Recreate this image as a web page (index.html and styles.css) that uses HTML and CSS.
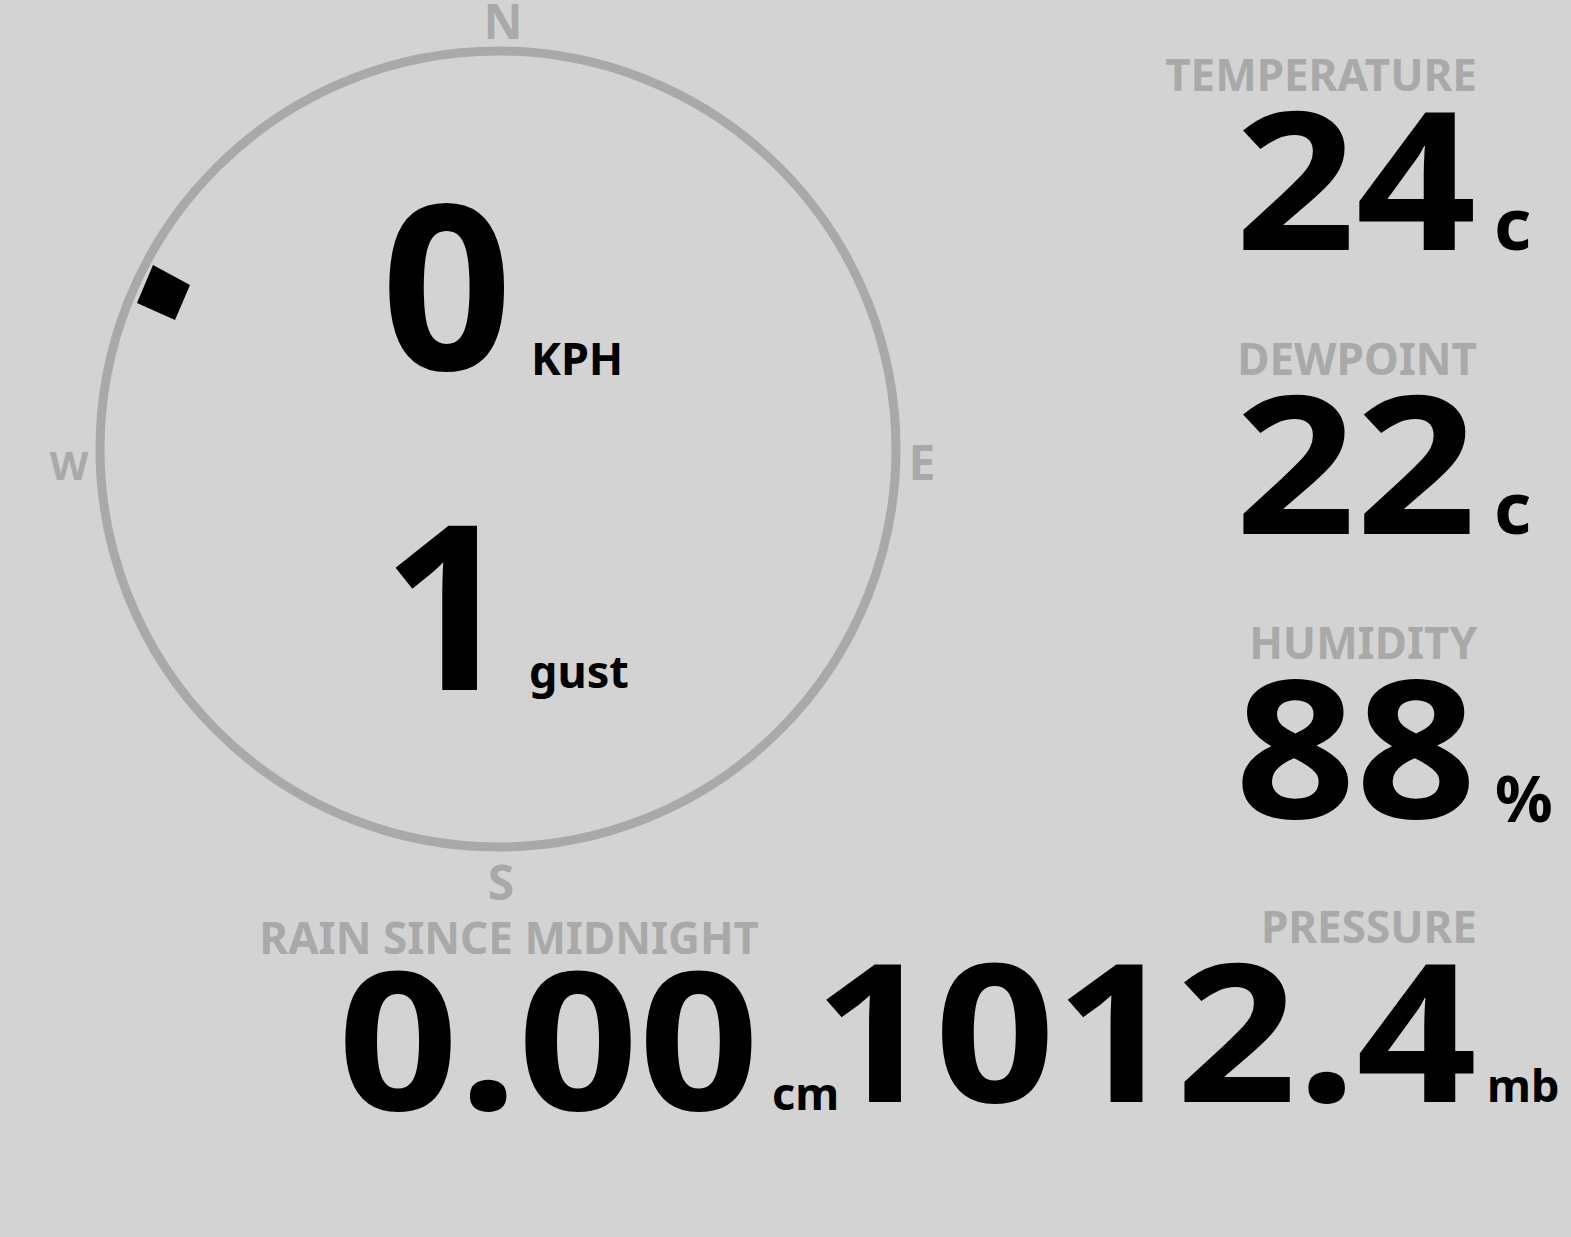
FILE: index.html
```html
<!DOCTYPE html>
<html lang="en">
<head>
<meta charset="utf-8">
<title>Weather</title>
<link rel="stylesheet" href="styles.css">
</head>
<body>
<div class="page">
  <div class="left">
    <svg class="compass" width="1000" height="910" viewBox="0 0 1000 910" xmlns="http://www.w3.org/2000/svg">
      <circle class="ring" cx="498" cy="449" r="398"/>
      <text class="cardinal" x="503" y="39" text-anchor="middle">N</text>
      <text class="cardinal" x="922" y="480" text-anchor="middle">E</text>
      <text class="cardinal" x="501" y="900" text-anchor="middle">S</text>
      <text class="cardinal w" x="69" y="480" text-anchor="middle">W</text>
      <polygon class="needle" points="153,265 190,285 175,320 137,303"/>
      <text class="speed" x="381" y="370">0</text>
      <text class="speed-unit" x="531" y="375">KPH</text>
      <text class="speed" x="382" y="690">1</text>
      <text class="speed-unit" x="529" y="688">gust</text>
    </svg>
    <div class="stat rain">
      <div class="label">RAIN SINCE MIDNIGHT</div>
      <div class="value"><span class="num">0.00</span><span class="unit u-cm">cm</span></div>
    </div>
  </div>
  <div class="right">
    <div class="stat">
      <div class="label">TEMPERATURE</div>
      <div class="value"><span class="num">24</span><span class="unit u-big">c</span></div>
    </div>
    <div class="stat">
      <div class="label">DEWPOINT</div>
      <div class="value"><span class="num">22</span><span class="unit u-big">c</span></div>
    </div>
    <div class="stat">
      <div class="label">HUMIDITY</div>
      <div class="value"><span class="num">88</span><span class="unit u-pct">%</span></div>
    </div>
    <div class="stat">
      <div class="label">PRESSURE</div>
      <div class="value"><span class="num">1012.4</span><span class="unit u-mb">mb</span></div>
    </div>
  </div>
</div>
</body>
</html>
```

FILE: styles.css
```css
html {
  background: #d3d3d3;
}
body {
  margin: 0;
  background: #d3d3d3;
  font-family: "Noto Sans", "Open Sans", sans-serif;
  font-weight: 700;
  color: #000;
}
.page {
  display: grid;
  grid-template-columns: 1000px minmax(0, 1fr);
  width: 1571px;
  height: 1237px;
  overflow: hidden;
}
.left {
  display: flex;
  flex-direction: column;
  min-width: 0;
}
.compass {
  display: block;
}
.ring {
  fill: none;
  stroke: #a9a9a9;
  stroke-width: 9;
}
.cardinal {
  font-family: "Noto Sans", sans-serif;
  font-weight: 700;
  font-size: 48px;
  fill: #a9a9a9;
}
.cardinal.w {
  font-size: 40px;
}
.needle {
  fill: #000;
}
.speed {
  font-family: "Noto Sans", sans-serif;
  font-weight: 700;
  font-size: 230px;
  fill: #000;
}
.speed-unit {
  font-family: "Noto Sans", sans-serif;
  font-weight: 700;
  font-size: 45px;
  fill: #000;
}
.right {
  display: flex;
  flex-direction: column;
  align-items: flex-end;
  gap: 82px;
  padding: 52px 94px 0 0;
  min-width: 0;
}
.stat {
  display: flex;
  flex-direction: column;
  align-items: flex-end;
}
.rain {
  width: 759px;
}
.rain .label {
  margin-top: 5px;
}
.rain .value {
  line-height: 152px;
}
.label {
  font-size: 44px;
  line-height: 45px;
  color: #a9a9a9;
  white-space: nowrap;
}
.value {
  position: relative;
  display: flex;
  justify-content: flex-end;
  font-size: 192px;
  line-height: 157px;
}
.num {
  display: block;
  white-space: nowrap;
  transform: scaleX(1.1);
  transform-origin: right center;
}
.unit {
  position: absolute;
  left: 100%;
  bottom: -1px;
  margin-left: 20px;
  font-size: 45px;
  line-height: 45px;
  white-space: nowrap;
}
.u-big {
  font-size: 72px;
  line-height: 72px;
  bottom: -4px;
  margin-left: 17px;
}
.u-pct {
  font-size: 64px;
  line-height: 64px;
  bottom: -8px;
  margin-left: 18px;
}
.u-cm {
  bottom: -3px;
  margin-left: 13px;
}
.u-mb {
  margin-left: 10px;
}
```
